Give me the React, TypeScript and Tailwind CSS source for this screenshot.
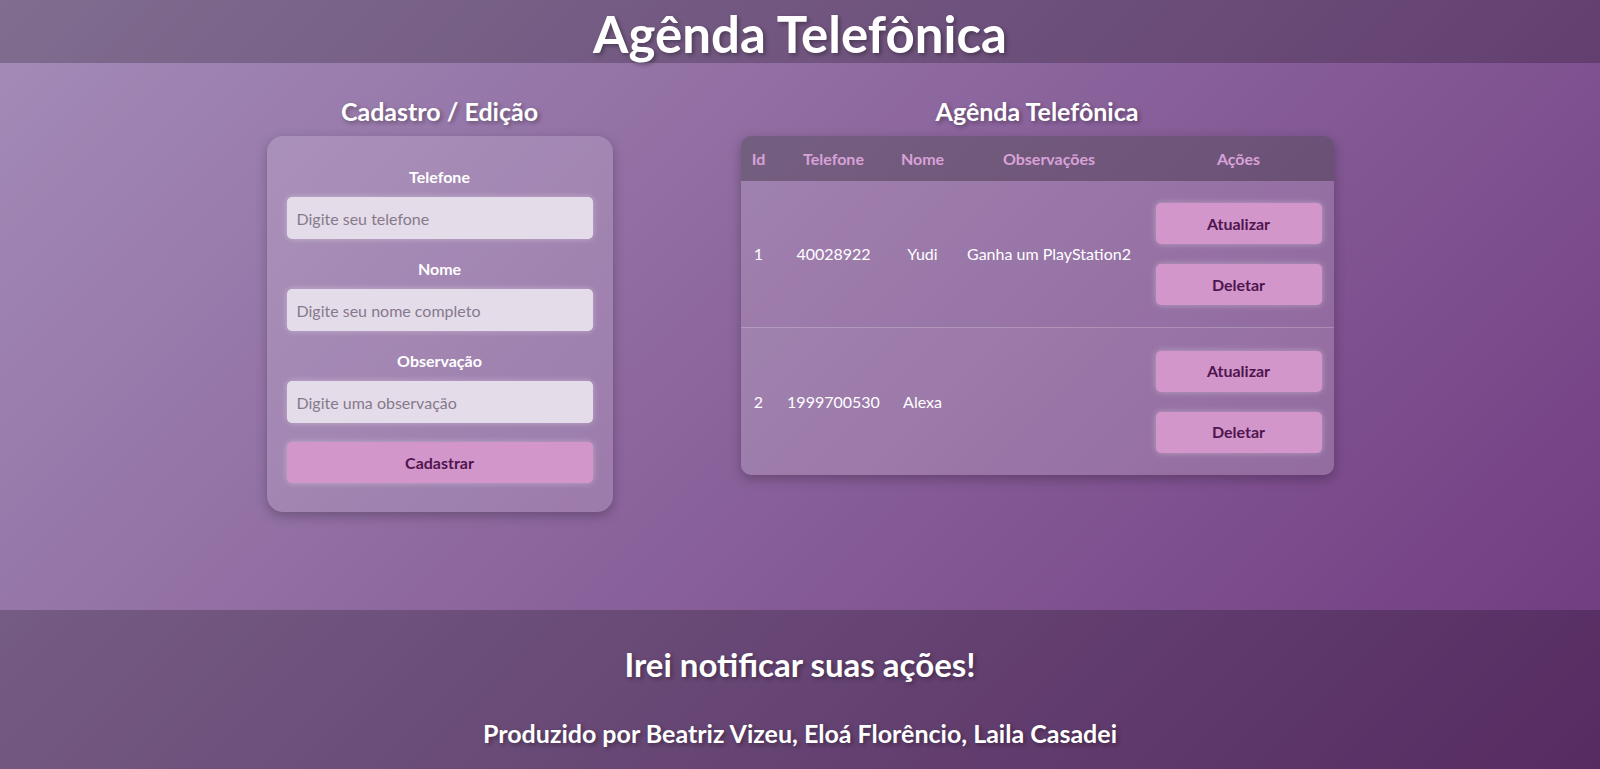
import { useState } from 'react'

type Contato = {
  id: number
  telefone: string
  nome: string
  observacao: string
}

const contatosIniciais: Contato[] = [
  { id: 1, telefone: '40028922', nome: 'Yudi', observacao: 'Ganha um PlayStation2' },
  { id: 2, telefone: '1999700530', nome: 'Alexa', observacao: '' }
]

const tituloSombra = '[text-shadow:2px_2px_4px_rgba(0,0,0,0.35)]'

function Campo({ label, placeholder }: { label: string; placeholder: string }) {
  const [valor, setValor] = useState('')
  return (
    <div className="flex flex-col">
      <label className="h-[22px] mb-[9px] text-center text-[16px] leading-[22px] font-bold text-white">
        {label}
      </label>
      <input
        type="text"
        value={valor}
        placeholder={placeholder}
        onChange={e => setValor(e.target.value)}
        className="h-[42px] mb-[19px] w-full rounded-[5px] bg-[#e5dce9] px-[10px] text-[16px] text-[#3a2a40] placeholder:text-[#85798c] outline-none shadow-[0_0_6px_rgba(255,255,255,0.35)]"
      />
    </div>
  )
}

export default function App() {
  const [contatos] = useState<Contato[]>(contatosIniciais)

  return (
    <div className="min-h-screen flex flex-col font-['Lato','Open_Sans',sans-serif] bg-[linear-gradient(135deg,#a48cb8,#6f387e)] text-white">
      <header className="h-[63px] flex items-center justify-center bg-black/[0.22]">
        <h1 className={`pt-[5px] text-[51px] leading-[58px] font-bold ${tituloSombra}`}>Agênda Telefônica</h1>
      </header>

      <main className="flex-1 flex justify-center items-start gap-[128px] pt-[32px]">
        <section className="w-[346px] flex flex-col">
          <h2 className={`h-[32px] mb-[9px] text-center text-[25px] leading-[32px] font-bold ${tituloSombra}`}>
            Cadastro / Edição
          </h2>
          <form
            onSubmit={e => e.preventDefault()}
            className="rounded-[16px] bg-white/[0.15] px-[20px] pt-[30px] pb-[29px] shadow-[0_4px_12px_rgba(0,0,0,0.25)]"
          >
            <Campo label="Telefone" placeholder="Digite seu telefone" />
            <Campo label="Nome" placeholder="Digite seu nome completo" />
            <Campo label="Observação" placeholder="Digite uma observação" />
            <button
              type="submit"
              className="h-[41px] w-full rounded-[5px] bg-[#d396cb] text-[16px] font-bold text-[#4e154f] shadow-[0_0_6px_rgba(255,255,255,0.35)]"
            >
              Cadastrar
            </button>
          </form>
        </section>

        <section className="w-[593px] flex flex-col">
          <h2 className={`h-[32px] mb-[9px] text-center text-[25px] leading-[32px] font-bold ${tituloSombra}`}>
            Agênda Telefônica
          </h2>
          <div className="rounded-[10px] overflow-hidden bg-white/[0.15] shadow-[0_4px_12px_rgba(0,0,0,0.25)]">
            <div className="grid grid-cols-[36px_114px_64px_189px_190px] h-[45px] items-center bg-black/[0.27] text-center text-[16px] font-bold text-[#d8a2d8]">
              <span>Id</span>
              <span>Telefone</span>
              <span>Nome</span>
              <span>Observações</span>
              <span>Ações</span>
            </div>
            {contatos.map((c, i) => (
              <div
                key={c.id}
                className={`grid grid-cols-[36px_114px_64px_189px_190px] items-center text-center text-[16px] text-white ${
                  i > 0 ? 'border-t border-white/20 bg-white/[0.04] h-[148px]' : 'h-[146px]'
                }`}
              >
                <span>{c.id}</span>
                <span>{c.telefone}</span>
                <span>{c.nome}</span>
                <span>{c.observacao}</span>
                <div className="flex flex-col items-center gap-[20px]">
                  <button className="h-[41px] w-[166px] rounded-[5px] bg-[#d396cb] text-[16px] font-bold text-[#4e154f] shadow-[0_0_6px_rgba(255,255,255,0.35)]">
                    Atualizar
                  </button>
                  <button className="h-[41px] w-[166px] rounded-[5px] bg-[#d396cb] text-[16px] font-bold text-[#4e154f] shadow-[0_0_6px_rgba(255,255,255,0.35)]">
                    Deletar
                  </button>
                </div>
              </div>
            ))}
          </div>
        </section>
      </main>

      <footer className="h-[159px] flex flex-col items-center bg-black/[0.22] pt-[34px] overflow-hidden">
        <h2 className={`text-[33px] leading-[40px] font-bold ${tituloSombra}`}>Irei notificar suas ações!</h2>
        <p className={`mt-[33px] text-[25px] leading-[32px] font-bold ${tituloSombra}`}>
          Produzido por Beatriz Vizeu, Eloá Florêncio, Laila Casadei
        </p>
      </footer>
    </div>
  )
}
